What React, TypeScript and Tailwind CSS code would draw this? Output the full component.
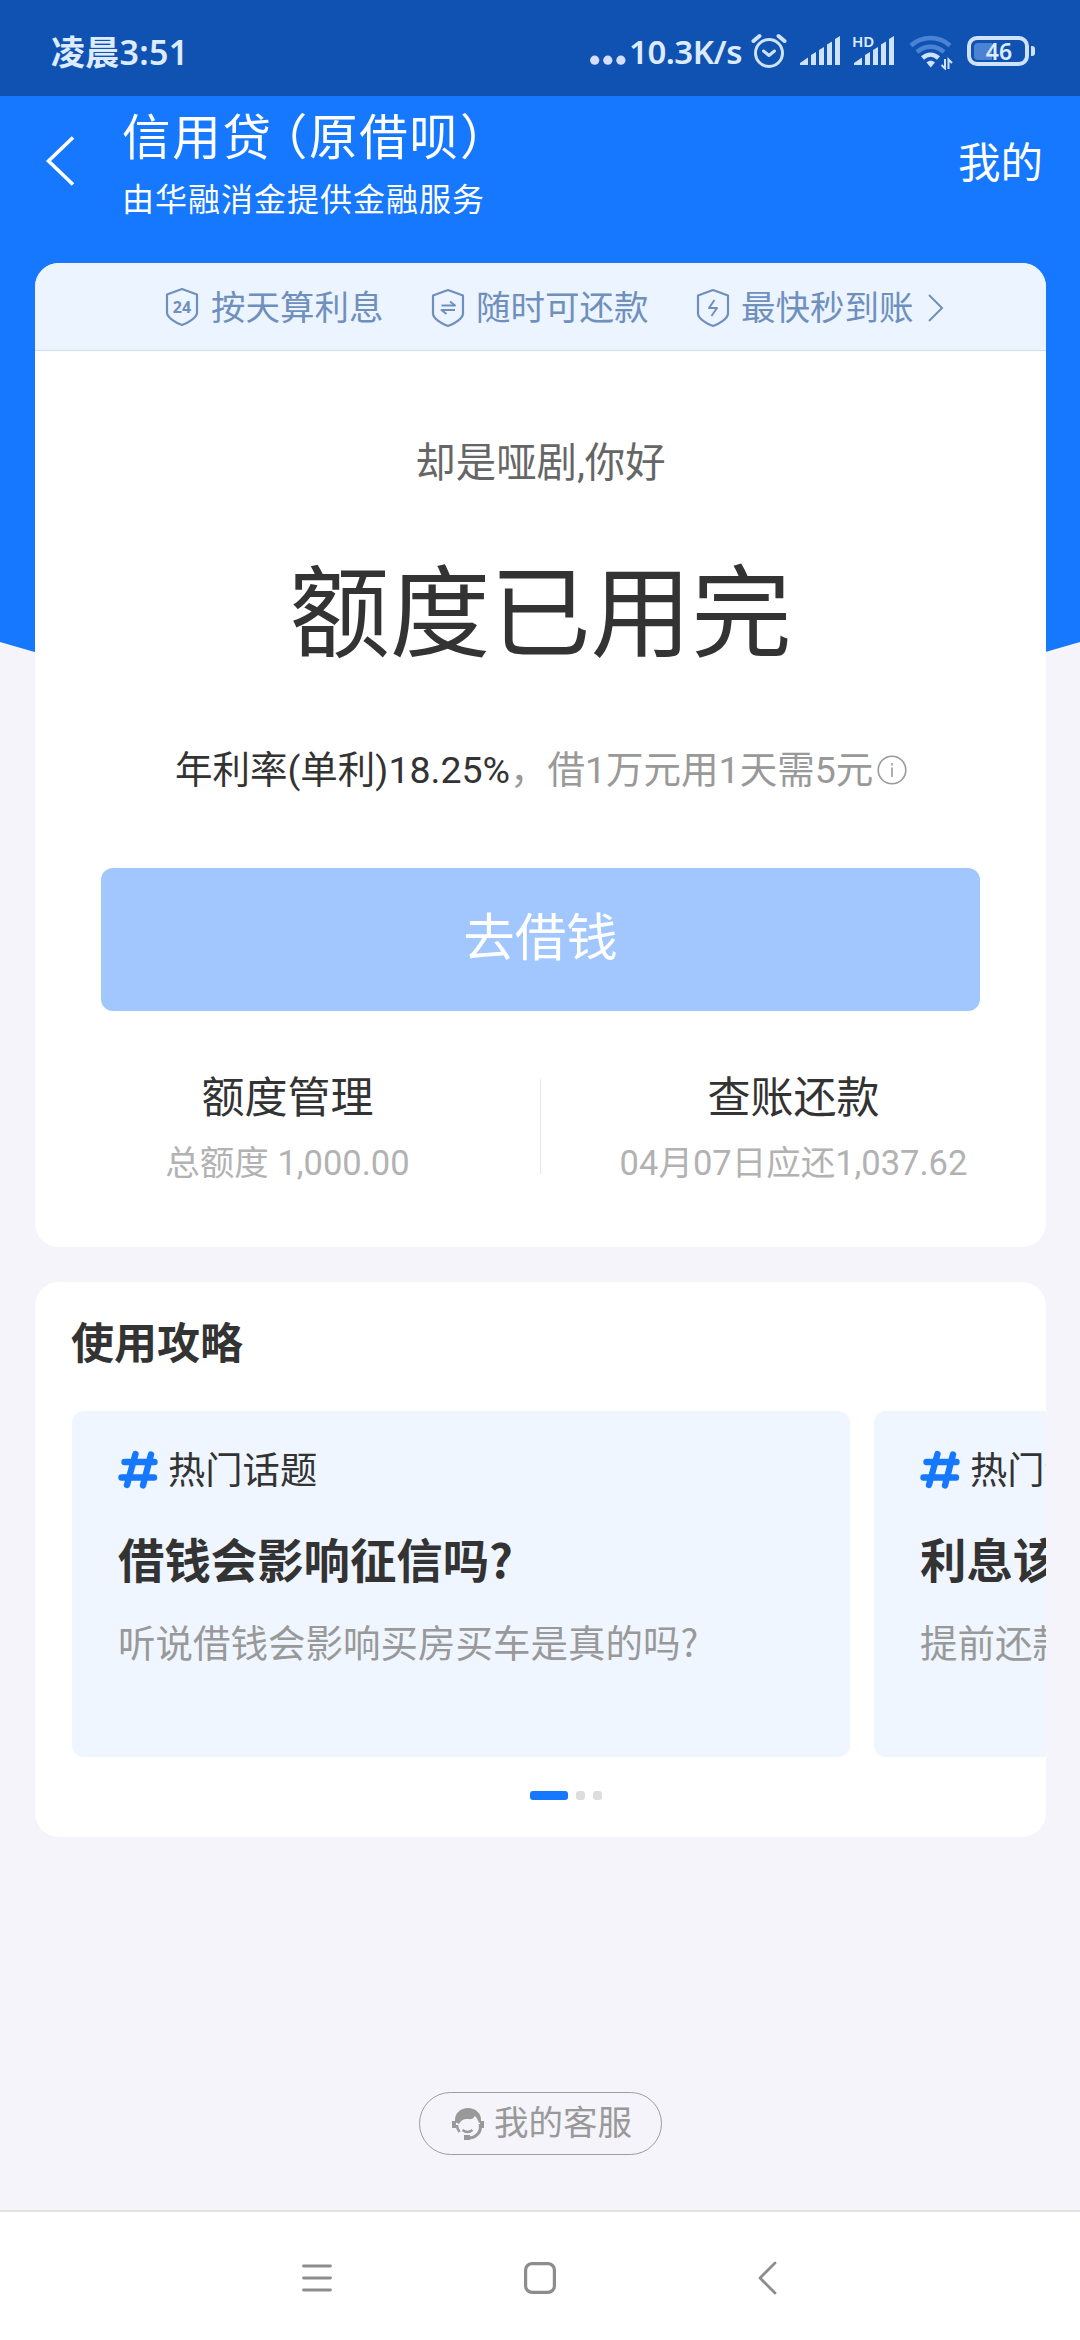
import clsx from "clsx";
import React from "react";

const topics = [
  { title: "借钱会影响征信吗?", desc: "听说借钱会影响买房买车是真的吗?" },
  { title: "利息该怎么算?", desc: "提前还款利息怎么算?" },
];

function SignalBars() {
  return (
    <svg width="40" height="29" viewBox="0 0 40 29" fill="#cfe2fb">
      <path d="M0 29v-2l8-5.500v7.500z" />
      <path d="M11 29V19l5-3v13z" />
      <path d="M19 29V14l5-3v18z" />
      <path d="M27 29V8.500l5-3V29z" />
      <path d="M35 29V3l5-3v29z" />
    </svg>
  );
}

function StatusBar() {
  return (
    <div className="flex h-24 flex-none items-start bg-[#1052b1] text-[#dcebff]">
      <span className="mt-8 ml-[51px] font-['Noto_Sans','Noto_Sans_CJK_SC',sans-serif] text-[34px] leading-10 font-semibold tracking-[0.3px]">
        凌晨3:51
      </span>
      <svg
        className="mt-[55px] ml-auto"
        width="36"
        height="10"
        viewBox="0 0 36 10"
        fill="#d5defa"
      >
        <circle cx="4.700" cy="5.200" r="4.600" />
        <circle cx="17.800" cy="5.200" r="4.600" />
        <circle cx="30.900" cy="5.200" r="4.600" />
      </svg>
      <span className="mt-8 ml-[3px] w-[115px] font-['Noto_Sans',sans-serif] text-[33px] leading-10 font-semibold tracking-[-0.5px] whitespace-nowrap">
        10.3K/s
      </span>
      <svg
        className="mt-[33px] ml-[7px]"
        width="36"
        height="36"
        viewBox="0 0 36 36"
        fill="none"
        stroke="#cfe2fb"
        strokeWidth="3"
        strokeLinecap="round"
        strokeLinejoin="round"
      >
        <circle cx="18" cy="20" r="13.500" />
        <path d="M12.500 18l5.500 4.500 5.500-4.500" />
        <path strokeWidth="4" d="M2.500 8l6-5M33.500 8l-6-5" />
      </svg>
      <div className="mt-9 ml-[13px]">
        <SignalBars />
      </div>
      <div className="relative mt-9 ml-[14px]">
        <SignalBars />
        <span className="absolute -top-[3px] -left-[2px] font-['Noto_Sans',sans-serif] text-[15px] leading-4 font-semibold">
          HD
        </span>
      </div>
      <svg
        className="mt-[35px] ml-[15px]"
        width="44"
        height="35"
        viewBox="0 0 44 35"
        fill="none"
        stroke="#cfe2fb"
      >
        <path stroke="#4a83d4" strokeWidth="4.500" d="M2 10.500c11-10 28-10 39 0" />
        <path stroke="#4a83d4" strokeWidth="4.500" d="M8 17c8-7 19-7 27 0" />
        <path strokeWidth="4.500" d="M13.500 23c5-4.500 11-4.500 16 0" />
        <path
          fill="#cfe2fb"
          stroke="none"
          d="M17.500 27.500c2.500-2.300 6-2.300 8.500 0l-4.300 5z"
        />
        <path strokeWidth="2" d="M36 24v9.500l-3.500-3.500M39.500 34v-9.500l3.500 3.500" />
      </svg>
      <div className="relative mt-9 ml-[14px] flex h-[30px] w-[62px] items-center rounded-[10px] border-4 border-[#cfe2fb] px-[3px]">
        <div className="h-[17px] w-[18px] rounded-l-[4px] bg-[#4a83d4]" />
        <span className="absolute inset-0 pl-[2px] text-center font-['Noto_Sans',sans-serif] text-[23px] leading-[23px] font-semibold">
          46
        </span>
      </div>
      <div className="mt-[46px] mr-[45px] ml-[2px] h-[10px] w-1 rounded-r-[3px] bg-[#cfe2fb]" />
    </div>
  );
}

function Shield({ children }: { children: React.ReactNode }) {
  return (
    <svg
      width="34"
      height="40"
      viewBox="0 0 34 40"
      fill="none"
      stroke="#6f90bd"
      strokeWidth="2.200"
      strokeLinejoin="round"
    >
      <path d="M17 2l15 5.500v18c0 5-9 10.500-15 12.500-6-2-15-7.500-15-12.500v-18z" />
      {children}
    </svg>
  );
}

function Perks() {
  return (
    <div className="flex h-[88px] items-center border-b border-[#cbdff5] bg-[#ecf4ff] pt-[2px] pl-[130px] text-[34.5px] leading-[48px] text-[#6f90bd]">
      <div className="mb-[2px] h-10">
        <Shield>
          <text
            x="17"
            y="25.500"
            textAnchor="middle"
            fill="#6f90bd"
            stroke="none"
            className="font-['Noto_Sans',sans-serif] text-[16px] font-bold"
          >
            24
          </text>
        </Shield>
      </div>
      <span className="ml-[12px] w-[173px] whitespace-nowrap">按天算利息</span>
      <div className="ml-[47px] h-10">
        <Shield>
          <path strokeWidth="2" d="M10.500 17.500H24l-5-4M24 22H10.500l5 4" />
        </Shield>
      </div>
      <span className="ml-[11px] w-[173px] whitespace-nowrap">随时可还款</span>
      <div className="ml-[47px] h-10">
        <Shield>
          <path strokeWidth="2" d="M18.500 12l-5.500 8h8l-5.500 8" />
        </Shield>
      </div>
      <span className="ml-[11px] w-[173px] whitespace-nowrap">最快秒到账</span>
      <svg
        className="ml-[14px]"
        width="16"
        height="28"
        viewBox="0 0 16 28"
        fill="none"
        stroke="#6f90bd"
        strokeWidth="2"
      >
        <path d="M1 1l13 13L1 27" />
      </svg>
    </div>
  );
}

function Hash() {
  return (
    <svg
      width="40"
      height="40"
      viewBox="0 0 40 40"
      fill="none"
      stroke="#1677ff"
      strokeWidth="6.400"
      strokeLinecap="round"
    >
      <path d="M6.500 13h30M3.500 28.500h32.500M17.500 5L9 36M33 5.500l-8 31" />
    </svg>
  );
}

function LoanCard() {
  return (
    <section className="h-[984px] overflow-hidden rounded-3xl bg-white text-[#333]">
      <Perks />
      <p className="mt-[85px] text-center text-[40.4px] leading-[56px] text-[#666]">
        却是哑剧,你好
      </p>
      <h1 className="mt-[53px] text-center text-[100.5px] leading-[140px]">
        额度已用完
      </h1>
      <div className="mt-[59px] flex items-center pl-[140px] text-[37.5px] leading-[52px] whitespace-nowrap">
        年利率(单利)18.25%
        <span className="text-[#999]">，借1万元用1天需5元</span>
        <svg
          className="ml-[4px]"
          width="30"
          height="30"
          viewBox="0 0 30 30"
          fill="none"
          stroke="#999"
          strokeWidth="1.600"
        >
          <circle cx="15" cy="15" r="13.800" />
          <path d="M15 12.500v9.500M15 8v2.500" />
        </svg>
      </div>
      <button className="mx-auto mt-[72px] block h-[143px] w-[879px] rounded-xl bg-[#a2c7ff] pb-px text-[51.5px] text-white">
        去借钱
      </button>
      <div className="mt-[57px] flex text-center">
        <div className="flex-1">
          <p className="text-[43px] leading-[60px]">额度管理</p>
          <p className="mt-[11px] text-[34.5px] leading-[48px] text-[#b2b2b2]">
            总额度 1,000.00
          </p>
        </div>
        <div className="mt-[11px] h-[95px] w-px bg-[#e5e5e5]" />
        <div className="flex-1">
          <p className="text-[43px] leading-[60px]">查账还款</p>
          <p className="mt-[11px] text-[34.5px] leading-[48px] text-[#b2b2b2]">
            04月07日应还1,037.62
          </p>
        </div>
      </div>
    </section>
  );
}

function Guide() {
  return (
    <section className="mt-[35px] h-[555px] overflow-hidden rounded-3xl bg-white pl-9 font-['Noto_Sans_CJK_SC',sans-serif] text-[#333]">
      <h2 className="pt-[27px] text-[43px] leading-[62px] font-bold">
        使用攻略
      </h2>
      <div className="mt-[40px] ml-px flex gap-6">
        {topics.map((topic) => (
          <div
            className="h-[346px] w-[778px] flex-none rounded-xl bg-[#eff6ff] pl-[46px] whitespace-nowrap"
            key={topic.title}
          >
            <div className="mt-[33px] flex items-center gap-[10px]">
              <Hash />
              <span className="-mt-[2px] text-[37.3px] leading-[52px]">
                热门话题
              </span>
            </div>
            <h3 className="mt-[31px] text-[46.4px] leading-[66px] font-bold">
              {topic.title}
            </h3>
            <p className="mt-[24px] text-[37.5px] leading-[52px] text-[#999]">
              {topic.desc}
            </p>
          </div>
        ))}
      </div>
      <div className="mt-[34px] ml-[459px] flex gap-2">
        {[0, 1, 2].map((n) => (
          <i
            className={clsx(
              "h-[9px] rounded-[3px]",
              n === 0 ? "w-[38px] bg-[#1677ff]" : "w-[9px] bg-[#ddd]"
            )}
            key={n}
          />
        ))}
      </div>
    </section>
  );
}

function NavBar() {
  return (
    <nav className="flex h-[130px] flex-none items-start border-t-2 border-[#e2e2e2] bg-white pt-[49px] pl-[300px]">
      <svg width="34" height="34" viewBox="0 0 34 34" stroke="#8d8d8d" strokeWidth="2.800" strokeLinecap="round">
        <path d="M3.500 5h27M3.500 17h27M3.500 29h27" />
      </svg>
      <svg className="ml-[189px]" width="34" height="34" viewBox="0 0 34 34" fill="none" stroke="#8d8d8d" strokeWidth="3.200">
        <rect x="2.600" y="2.600" width="28.800" height="28.800" rx="6.500" />
      </svg>
      <svg className="ml-[200px]" width="22" height="34" viewBox="0 0 22 34" fill="none" stroke="#8d8d8d" strokeWidth="2.800" strokeLinecap="round" strokeLinejoin="round">
        <path d="M18 2L3 17l15 15" />
      </svg>
    </nav>
  );
}

export default function App() {
  return (
    <div className="flex h-[2340px] w-[1080px] flex-col overflow-hidden bg-[#f4f4fa] font-['Roboto','Noto_Sans_CJK_SC',sans-serif]">
      <StatusBar />
      <header className="flex h-[167px] flex-none items-start bg-[#1677ff] text-white">
        <svg className="mt-[40px] ml-[45px]" width="30" height="50" viewBox="0 0 30 50" fill="none" stroke="#fff" strokeWidth="3.600">
          <path d="M28 1.500L3.500 25 28 48.500" />
        </svg>
        <div className="mt-[5px] ml-[47px] font-['Noto_Sans_CJK_SC',sans-serif]">
          <h1 className="flex text-[48.500px] leading-[66px] tracking-[1.8px]">
            信用贷
            <span className="ml-[10px] [font-feature-settings:'halt']">（</span>
            原借呗
            <span className="[font-feature-settings:'halt']">）</span>
          </h1>
          <p className="mt-[7px] text-[32px] leading-[46px] tracking-[1px]">
            由华融消金提供金融服务
          </p>
        </div>
        <span className="mt-[38px] mr-[37px] ml-auto text-[42.500px] leading-[60px]">
          我的
        </span>
      </header>

      <main className="grid flex-1 grid-cols-1">
        <svg className="col-start-1 row-start-1" width="1080" height="460" viewBox="0 0 1080 460">
          <path fill="#1677ff" d="M0 0h1080v379Q540 540 0 379z" />
        </svg>
        <div className="col-start-1 row-start-1 flex flex-col pr-[34px] pl-[35px]">
          <LoanCard />
          <Guide />
          <button className="mt-[255px] flex h-[63px] w-[243px] items-center gap-[9px] self-center rounded-full border-[1.5px] border-[#9c9ca2] pl-[31px] text-[34.5px] text-[#999]">
            <svg width="34" height="34" viewBox="0 0 34 34" fill="none" stroke="#999" strokeWidth="3">
              <path fill="#999" stroke="none" d="M4 15C3 6 10 1 17 1s14 5 13 14l-2 1c-1-3-2-5-4-7-2 3-4 3.500-7 3-4-.500-7 1-9 5z" />
              <path strokeWidth="4" d="M3 14v7M31 14v7" />
              <path d="M29 17c2 8-4 14-12 14" />
              <path strokeWidth="2.500" d="M6 18c0 3 1 5 2.500 7M11.500 23c3 2.300 7 2.300 10 0" />
              <path strokeWidth="5" d="M13 30.500h6" />
            </svg>
            <span className="whitespace-nowrap">我的客服</span>
          </button>
        </div>
      </main>
      <NavBar />
    </div>
  );
}
